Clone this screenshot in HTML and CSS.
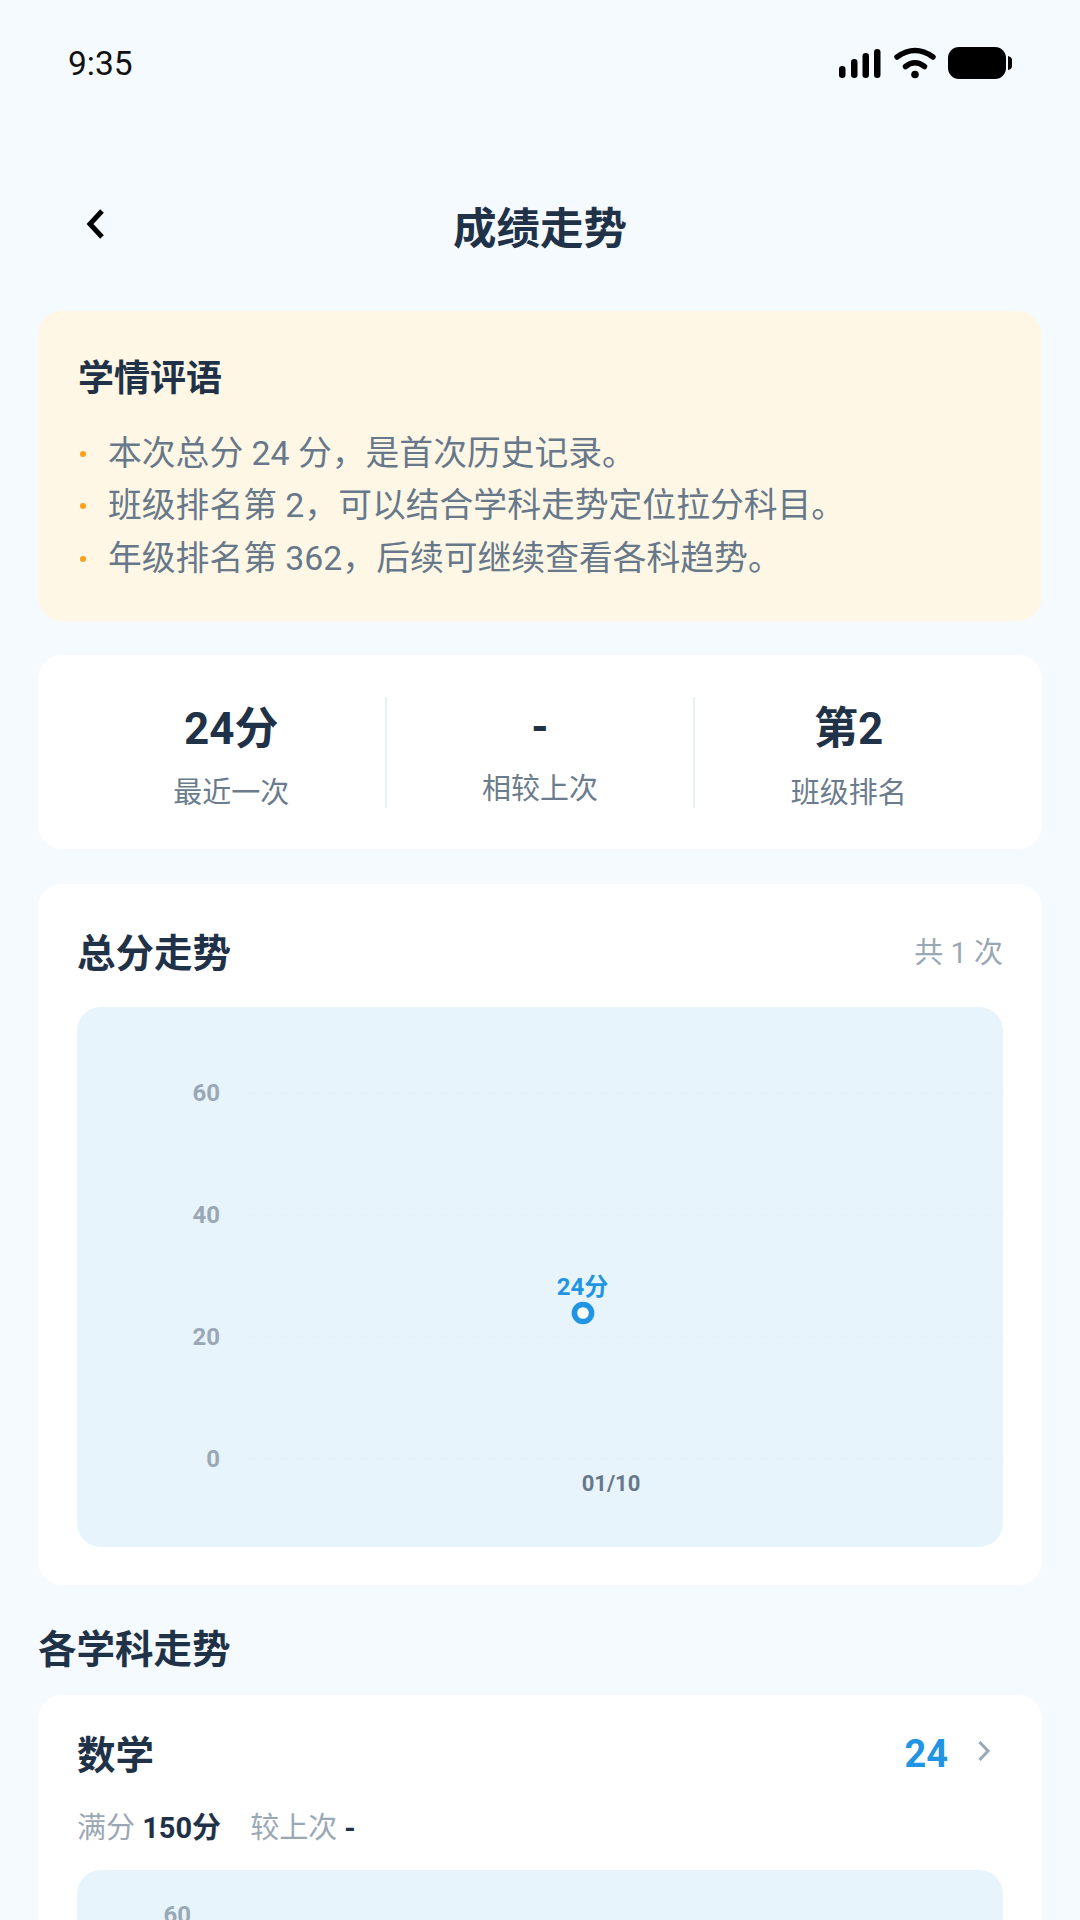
FILE: index.html
```html
<!DOCTYPE html>
<html lang="zh-CN">
<head>
    <meta charset="utf-8">
    <title>成绩走势</title>
    <link rel="stylesheet" href="styles.css">
</head>
<body>
    <div class="status-bar">
        <span class="status-time">9:35</span>
        <svg class="status-icons" width="180" height="36" viewBox="0 0 180 36">
            <rect x="4" y="21" width="6.5" height="12" rx="3.2"/>
            <rect x="16" y="14" width="6.5" height="19" rx="3.2"/>
            <rect x="27.500" y="8" width="6.500" height="25" rx="3.2"/>
            <rect x="39" y="4" width="6.500" height="29" rx="3.2"/>
            <path d="M62 12 Q80 -1 98 12" fill="none" stroke="#000" stroke-width="5.500" stroke-linecap="round"/>
            <path d="M70.500 21.500 Q80 14 89.500 21.500" fill="none" stroke="#000" stroke-width="5.500" stroke-linecap="round"/>
            <circle cx="80" cy="29.500" r="3.800"/>
            <rect x="113" y="2" width="58" height="32" rx="11"/>
            <path d="M173 11 Q177 12 177 15 V21 Q177 24 173 25 Z"/>
        </svg>
    </div>

    <header class="nav">
        <svg class="nav-back" width="24" height="34" viewBox="0 0 24 34">
            <path d="M18 4 L6 17 L18 30" fill="none" stroke="#000" stroke-width="5"/>
        </svg>
        <h1 class="nav-title">成绩走势</h1>
    </header>

    <main class="content">
        <section class="card notice">
            <h2 class="notice-title">学情评语</h2>
            <ul class="notice-list">
                <li>本次总分 24 分，是首次历史记录。</li>
                <li>班级排名第 2，可以结合学科走势定位拉分科目。</li>
                <li>年级排名第 362，后续可继续查看各科趋势。</li>
            </ul>
        </section>

        <section class="card stats">
            <div class="stat">
                <div class="stat-value">24分</div>
                <div class="stat-label">最近一次</div>
            </div>
            <div class="stat">
                <div class="stat-value">-</div>
                <div class="stat-label">相较上次</div>
            </div>
            <div class="stat">
                <div class="stat-value">第2</div>
                <div class="stat-label">班级排名</div>
            </div>
        </section>

        <section class="card trend">
            <div class="trend-head">
                <h2 class="section-title">总分走势</h2>
                <span class="trend-count">共 1 次</span>
            </div>
            <svg class="chart chart-total" width="926" height="540" viewBox="0 0 926 540">
                <g class="grid">
                    <line x1="171" y1="86" x2="926" y2="86"/>
                    <line x1="171" y1="208" x2="926" y2="208"/>
                    <line x1="171" y1="330" x2="926" y2="330"/>
                    <line x1="171" y1="452" x2="926" y2="452"/>
                </g>
                <g class="tick">
                    <text x="143" y="86">60</text>
                    <text x="143" y="208">40</text>
                    <text x="143" y="330">20</text>
                    <text x="143" y="452">0</text>
                </g>
                <text class="point-label" x="505.500" y="280">24分</text>
                <circle class="point" cx="506" cy="306" r="8.600"/>
                <text class="date-label" x="534" y="476">01/10</text>
            </svg>
        </section>

        <h2 class="section-title subjects-title">各学科走势</h2>

        <section class="card subject">
            <div class="subject-head">
                <h3 class="section-title">数学</h3>
                <span class="subject-score">24</span>
                <svg class="subject-arrow" width="14" height="22" viewBox="0 0 14 22">
                    <path d="M2.500 2 L11 11 L2.500 20" fill="none" stroke="#9aa8b5" stroke-width="3"/>
                </svg>
            </div>
            <p class="subject-meta">
                <span>满分 <b>150分</b></span>
                <span>较上次 <b>-</b></span>
            </p>
            <svg class="chart chart-subject" width="926" height="360" viewBox="0 0 926 360">
                <g class="tick">
                    <text x="114" y="45">60</text>
                </g>
            </svg>
        </section>
    </main>
</body>
</html>
```

FILE: styles.css
```css
html, body {
    margin: 0;
    height: 1920px;
    overflow: hidden;
}

body {
    background-color: #f5faff;
    color: #1f3247;
    font-family: Roboto, "Noto Sans CJK SC", sans-serif;
}

h1, h2, h3, p, ul {
    margin: 0;
    padding: 0;
}

.status-bar {
    display: flex;
    justify-content: space-between;
    align-items: center;
    height: 36px;
    padding: 45px 65px 0 68px;
}

.status-time {
    font-size: 33.500px;
    color: #111;
}

.status-icons {
    display: block;
}

.nav {
    position: relative;
    display: flex;
    justify-content: center;
    align-items: center;
    height: 64px;
    margin-top: 112px;
}

.nav-back {
    position: absolute;
    left: 84px;
    top: 14px;
}

.nav-title {
    font-size: 43.500px;
    font-weight: 700;
}

.content {
    display: flex;
    flex-direction: column;
    padding: 54px 38px 0;
}

.card {
    background-color: #fff;
    border-radius: 24px;
}

.notice {
    background-color: #fff7e6;
    height: 310px;
    box-sizing: border-box;
    padding: 42px 40px 40px;
}

.notice-title {
    font-size: 36px;
    line-height: 52px;
    font-weight: 700;
}

.notice-list {
    list-style: none;
    margin-top: 23px;
}

.notice-list li {
    position: relative;
    padding-left: 30px;
    font-size: 33.800px;
    line-height: 52.300px;
    color: #66788a;
}

.notice-list li::before {
    content: "";
    position: absolute;
    left: 2px;
    top: 23px;
    width: 6px;
    height: 6px;
    border-radius: 50%;
    background-color: #ff9f1a;
}

.stats {
    display: flex;
    height: 194px;
    box-sizing: border-box;
    margin-top: 34px;
    padding: 42px 40px 41px;
}

.stat {
    flex: 1;
    display: flex;
    flex-direction: column;
    align-items: center;
    padding-top: 5px;
}

.stat + .stat {
    border-left: 2px solid #e8eff5;
}

.stat-value {
    font-size: 44px;
    line-height: 54px;
    font-weight: 700;
}

.stat-label {
    margin-top: 13px;
    font-size: 29px;
    color: #6b7c8c;
}

.stat:nth-child(2) .stat-value {
    line-height: 50px;
}

.trend {
    margin-top: 35px;
    height: 701px;
    box-sizing: border-box;
    padding: 40px 39px;
}

.trend-head {
    display: flex;
    justify-content: space-between;
    align-items: center;
    height: 52px;
    margin-bottom: 31px;
}

.section-title {
    font-size: 38.500px;
    font-weight: 700;
}

.trend-count {
    font-size: 29px;
    color: #9aa8b5;
}

.chart {
    display: block;
    background-color: #e7f4fc;
    border-radius: 24px;
}

.grid line {
    stroke: #e4f2fa;
    stroke-width: 2;
    stroke-dasharray: 8 8;
}

.tick text {
    font-size: 24px;
    font-weight: 700;
    fill: #9aa8b5;
    text-anchor: end;
    dominant-baseline: central;
}

.point-label {
    font-size: 24px;
    font-weight: 700;
    fill: #1f95e3;
    text-anchor: middle;
    dominant-baseline: central;
}

.point {
    fill: #fff;
    stroke: #1f95e3;
    stroke-width: 5.500;
}

.date-label {
    font-size: 22px;
    font-weight: 700;
    fill: #66788a;
    text-anchor: middle;
    dominant-baseline: central;
}

.subjects-title {
    margin-top: 38px;
    line-height: 54px;
}

.subject {
    margin-top: 18px;
    padding: 30px 39px;
}

.subject-head {
    display: flex;
    align-items: center;
    height: 54px;
}

.subject-head .section-title {
    flex: 1;
}

.subject-score {
    position: relative;
    top: 2px;
    font-size: 38px;
    font-weight: 700;
    color: #1f95e3;
}

.subject-arrow {
    margin: -2px 12px 0 29px;
}

.subject-meta {
    display: flex;
    gap: 29px;
    margin-top: 29px;
    font-size: 29px;
    line-height: 40px;
    color: #9aa8b5;
}

.subject-meta b {
    color: #1f3247;
    font-weight: 700;
}

.chart-subject {
    margin-top: 22px;
}
```
